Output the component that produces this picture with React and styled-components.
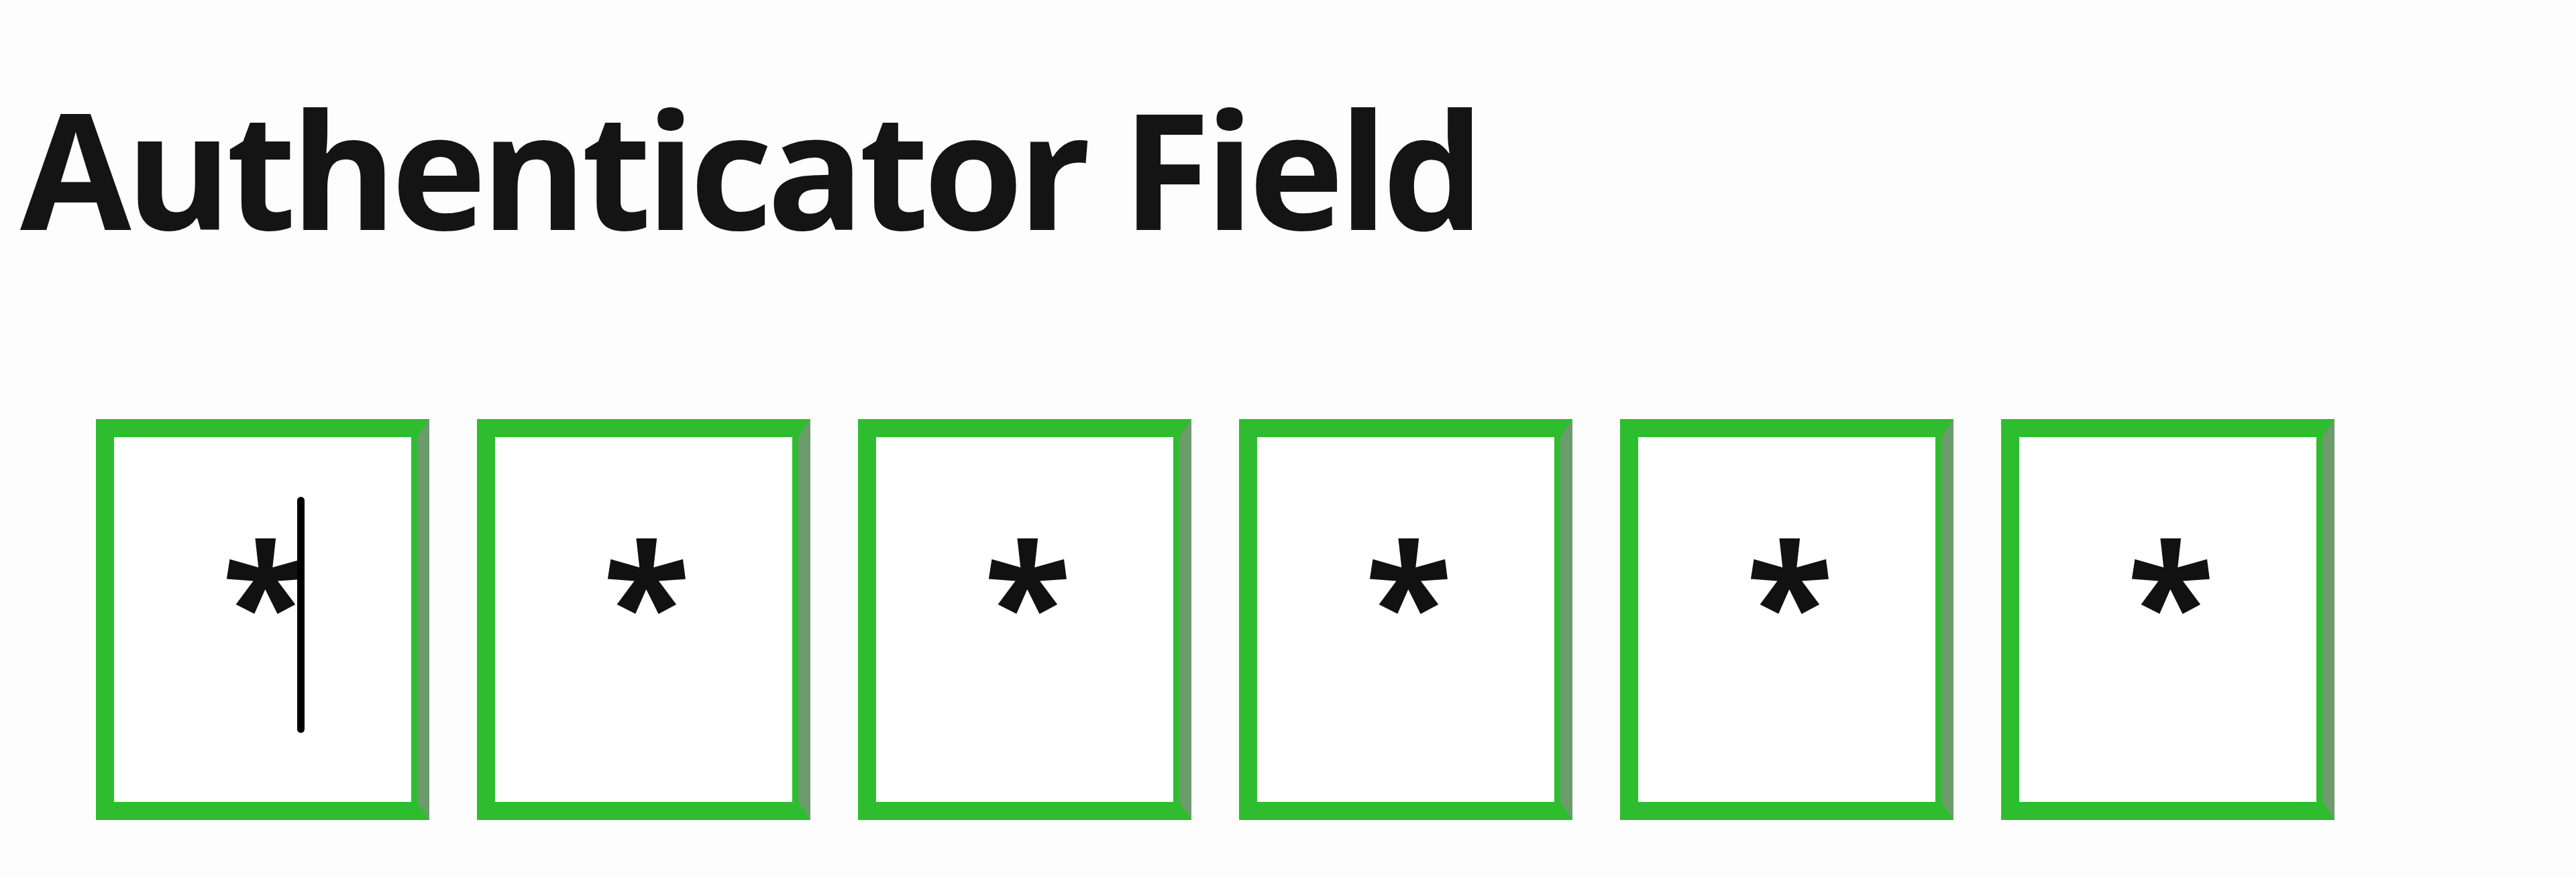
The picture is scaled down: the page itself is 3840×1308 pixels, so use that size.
import React from 'react'
import styled, { createGlobalStyle } from 'styled-components'

const GlobalStyle = createGlobalStyle`
  html, body {
    margin: 0;
    padding: 0;
    background: #fefdfe;
  }
  body {
    font-family: "Open Sans", "Noto Sans", sans-serif;
  }
`

const digits = ['*', '*', '*', '*', '*', '*']

const App = () => {
  return (
    <Page>
      <GlobalStyle />
      <Title>Authenticator Field</Title>
      <Row>
        {digits.map((d, i) => (
          <Cell key={i}>
            <Digit value={d} readOnly maxLength={1} />
            {i === 0 && <Caret />}
          </Cell>
        ))}
      </Row>
    </Page>
  )
}

export default App

const Page = styled.div`
  padding: 130px 0 0 30px;
  width: 3840px;
  height: 1308px;
  box-sizing: border-box;
  overflow: hidden;
`

const Title = styled.h1`
  margin: 0;
  font-family: "Open Sans", "Noto Sans", sans-serif;
  font-weight: 700;
  font-size: 240px;
  line-height: 1;
  letter-spacing: -8px;
  color: #141414;
`

const Row = styled.div`
  display: flex;
  gap: 71px;
  margin-top: 255px;
  padding-left: 113px;
`

const Cell = styled.div`
  position: relative;
  width: 497px;
  height: 598px;
`

const Digit = styled.input`
  box-sizing: border-box;
  width: 100%;
  height: 100%;
  margin: 0;
  padding: 0 0 64px 0;
  border: 27px solid #2ebd2e;
  border-right: 18px solid #6c9b6c;
  box-shadow: inset -9px 0 0 #2ebd2e;
  border-radius: 0;
  background: #fff;
  outline: none;
  text-align: center;
  font-family: "Open Sans", "Noto Sans", sans-serif;
  font-weight: 700;
  font-size: 240px;
  color: #111;
  caret-color: transparent;
`

const Caret = styled.span`
  position: absolute;
  left: 300px;
  top: 116px;
  width: 11px;
  height: 352px;
  background: #000;
  border-radius: 6px;
`
